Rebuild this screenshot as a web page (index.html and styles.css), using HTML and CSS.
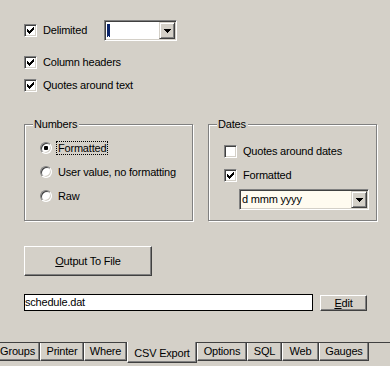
FILE: index.html
```html
<!DOCTYPE html>
<html>
<head>
<meta charset="utf-8">
<link rel="stylesheet" href="styles.css">
</head>
<body>
<div class="dialog">
  <div class="row row-delim">
    <div class="check delim-label">
      <span class="cb"><svg width="7" height="7" viewBox="0 0 7 7" shape-rendering="crispEdges"><path d="M0 2h1v3H0zM1 3h1v3H1zM2 4h1v3H2zM3 3h1v3H3zM4 2h1v3H4zM5 1h1v3H5zM6 0h1v3H6z" fill="#000"/></svg></span>
      <span class="label">Delimited</span>
    </div>
    <div class="combo combo-delim">
      <div class="combo-field"><span class="sel"></span></div>
      <div class="combo-btn"><svg width="7" height="4" viewBox="0 0 7 4" shape-rendering="crispEdges"><path d="M0 0h7v1H0zM1 1h5v1H1zM2 2h3v1H2zM3 3h1v1H3z" fill="#000"/></svg></div>
    </div>
  </div>
  <div class="row row-check row-cols">
    <div class="check">
      <span class="cb"><svg width="7" height="7" viewBox="0 0 7 7" shape-rendering="crispEdges"><path d="M0 2h1v3H0zM1 3h1v3H1zM2 4h1v3H2zM3 3h1v3H3zM4 2h1v3H4zM5 1h1v3H5zM6 0h1v3H6z" fill="#000"/></svg></span>
      <span class="label">Column headers</span>
    </div>
  </div>
  <div class="row row-check row-quotes">
    <div class="check">
      <span class="cb"><svg width="7" height="7" viewBox="0 0 7 7" shape-rendering="crispEdges"><path d="M0 2h1v3H0zM1 3h1v3H1zM2 4h1v3H2zM3 3h1v3H3zM4 2h1v3H4zM5 1h1v3H5zM6 0h1v3H6z" fill="#000"/></svg></span>
      <span class="label">Quotes around text</span>
    </div>
  </div>

  <div class="groups">
    <div class="group group-numbers">
      <span class="legend">Numbers</span>
      <div class="radio-row">
        <span class="rb"><span class="dot"></span></span>
        <span class="label focus">Formatted</span>
      </div>
      <div class="radio-row">
        <span class="rb"></span>
        <span class="label">User value, no formatting</span>
      </div>
      <div class="radio-row">
        <span class="rb"></span>
        <span class="label">Raw</span>
      </div>
    </div>
    <div class="group group-dates">
      <span class="legend">Dates</span>
      <div class="check date-check">
        <span class="cb"></span>
        <span class="label">Quotes around dates</span>
      </div>
      <div class="check date-check date-check2">
        <span class="cb"><svg width="7" height="7" viewBox="0 0 7 7" shape-rendering="crispEdges"><path d="M0 2h1v3H0zM1 3h1v3H1zM2 4h1v3H2zM3 3h1v3H3zM4 2h1v3H4zM5 1h1v3H5zM6 0h1v3H6z" fill="#000"/></svg></span>
        <span class="label">Formatted</span>
      </div>
      <div class="combo combo-date">
        <div class="combo-field combo-field-date">d mmm yyyy</div>
        <div class="combo-btn"><svg width="7" height="4" viewBox="0 0 7 4" shape-rendering="crispEdges"><path d="M0 0h7v1H0zM1 1h5v1H1zM2 2h3v1H2zM3 3h1v1H3z" fill="#000"/></svg></div>
      </div>
    </div>
  </div>

  <div class="btn btn-output"><span><span class="ul">O</span>utput To File</span></div>

  <div class="file-row">
    <div class="textfield">schedule.dat</div>
    <div class="btn btn-edit"><span><span class="ul">E</span>dit</span></div>
  </div>
</div>

<div class="tabs">
  <div class="tab tab-groups">Groups</div>
  <div class="tab tab-printer">Printer</div>
  <div class="tab tab-where">Where</div>
  <div class="tab tab-csv active">CSV Export</div>
  <div class="tab tab-options">Options</div>
  <div class="tab tab-sql">SQL</div>
  <div class="tab tab-web">Web</div>
  <div class="tab tab-gauges">Gauges</div>
</div>
</body>
</html>
```

FILE: styles.css
```css
* { box-sizing: border-box; }

html, body {
  margin: 0;
  padding: 0;
  background: #d4d0c8;
  width: 390px;
  height: 366px;
  overflow: hidden;
}

body {
  font-family: "Liberation Sans", Arial, sans-serif;
  font-size: 11px;
  letter-spacing: -0.2px;
  color: #000;
}

.dialog {
  padding: 20px 0 0 24px;
}

.row {
  display: flex;
  align-items: center;
}

.row-delim { height: 21px; }

.row-check { height: 16px; }
.row-cols { margin-top: 13px; }
.row-quotes { margin-top: 7px; }

.check {
  display: flex;
  align-items: center;
  gap: 6px;
  height: 16px;
}

.delim-label { width: 80px; }

.label {
  white-space: nowrap;
  line-height: 13px;
}

/* classic sunken checkbox */
.cb {
  width: 13px;
  height: 13px;
  flex: none;
  background: #fff;
  border: 1px solid;
  border-color: #808080 #ffffff #ffffff #808080;
  box-shadow: inset 1px 1px 0 #404040, inset -1px -1px 0 #d4d0c8;
  display: flex;
  align-items: center;
  justify-content: center;
}

.cb svg { display: block; }

/* combo boxes */
.combo {
  display: flex;
  border: 1px solid;
  border-color: #808080 #ffffff #ffffff #808080;
  box-shadow: inset 1px 1px 0 #404040, inset -1px -1px 0 #d4d0c8;
  padding: 1px;
  height: 21px;
}

.combo-delim { width: 73px; }

.combo-field {
  flex: 1;
  background: #fff;
  display: flex;
  align-items: center;
  padding-left: 1px;
}

.combo-field-date {
  background: #fffbf0;
  padding-left: 1px;
  line-height: 17px;
}

.sel {
  display: block;
  width: 3px;
  height: 13px;
  background: #0a246a;
  position: relative;
}

.sel::after {
  content: "";
  position: absolute;
  left: 1px;
  bottom: 0;
  width: 1px;
  height: 1px;
  background: #fff;
}

.combo-btn {
  width: 16px;
  flex: none;
  border: 1px solid;
  border-color: #d4d0c8 #404040 #404040 #d4d0c8;
  box-shadow: inset 1px 1px 0 #fff, inset -1px -1px 0 #808080;
  background: #d4d0c8;
  display: flex;
  align-items: center;
  justify-content: center;
}

.combo-btn svg { display: block; }

/* group boxes */
.groups {
  display: flex;
  gap: 15px;
  margin-top: 31px;
}

.group {
  position: relative;
  width: 169px;
  height: 97px;
  border: 1px solid #808080;
  box-shadow: inset 1px 1px 0 #fff, 1px 1px 0 #fff;
  display: flex;
  flex-direction: column;
  padding-left: 15px;
}

.legend {
  position: absolute;
  top: -8px;
  left: 8px;
  padding: 0 2px 0 1px;
  background: #d4d0c8;
  line-height: 14px;
}

.group-numbers {
  padding-top: 15px;
  gap: 8px;
}

.radio-row {
  display: flex;
  align-items: center;
  height: 16px;
  gap: 5px;
}

.rb {
  width: 12px;
  height: 12px;
  flex: none;
  border-radius: 50%;
  background: #fff;
  border: 1px solid;
  border-color: #808080 #ffffff #ffffff #808080;
  box-shadow: inset 1px 1px 0 #404040, inset -1px -1px 0 #d4d0c8;
  display: flex;
  align-items: center;
  justify-content: center;
}

.dot {
  width: 4px;
  height: 4px;
  border-radius: 1px;
  background: #000;
}

.radio-row .label { padding: 0 1px; }

.focus {
  outline: 1px dotted #000;
  outline-offset: 0;
  line-height: 12px;
}

.group-dates {
  padding-top: 18px;
}

.date-check2 { margin-top: 8px; }

.combo-date {
  width: 130px;
  margin-top: 6px;
  margin-left: 15px;
}

/* buttons */
.btn {
  border: 1px solid;
  border-color: #ffffff #404040 #404040 #ffffff;
  box-shadow: inset -1px -1px 0 #808080;
  background: #d4d0c8;
  display: flex;
  align-items: center;
  justify-content: center;
}

.ul {
  text-decoration: underline;
  text-underline-offset: 1px;
}

.btn-output {
  width: 128px;
  height: 30px;
  margin-top: 25px;
}

.file-row {
  display: flex;
  align-items: center;
  gap: 7px;
  margin-top: 18px;
}

.textfield {
  width: 289px;
  height: 17px;
  border: 1px solid #000;
  background: #fff;
  line-height: 15px;
  padding-left: 0;
}

.btn-edit {
  width: 47px;
  height: 16px;
}

/* tabs */
.tabs {
  display: flex;
  margin-top: 31px;
  border-top: 1px solid #404040;
  height: 24px;
  align-items: flex-start;
}

.tab {
  height: 18px;
  border-left: 1px solid #fff;
  border-right: 1px solid #404040;
  border-bottom: 1px solid #404040;
  box-shadow: inset -1px -1px 0 #808080;
  display: flex;
  align-items: center;
  justify-content: center;
  white-space: nowrap;
  flex: none;
  padding-bottom: 1px;
}

.tab-groups { width: 45px; margin-left: -5px; }
.tab-printer { width: 44px; }
.tab-where { width: 43px; }
.tab-csv { width: 70px; }
.tab-options { width: 50px; }
.tab-sql { width: 35px; }
.tab-web { width: 37px; }
.tab-gauges { width: 50px; }

.tab.active {
  margin-top: -1px;
  height: 21px;
  padding-top: 2px;
  background: #d4d0c8;
}
```
